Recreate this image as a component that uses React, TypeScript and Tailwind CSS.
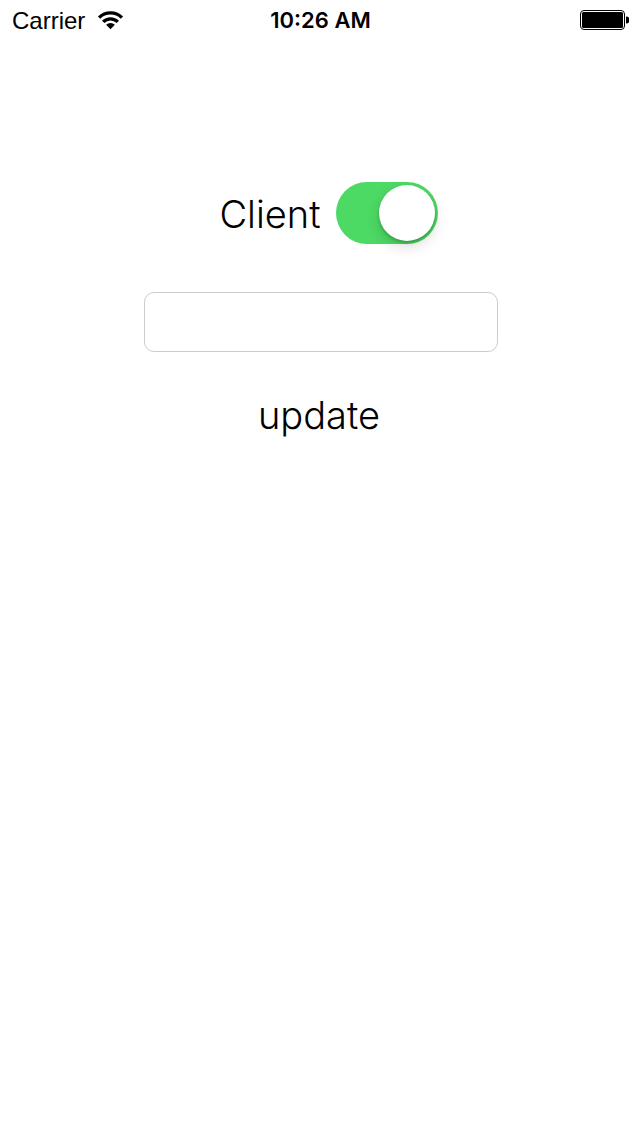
import { useState } from "react";

function StatusBar() {
  return (
    <header className="grid h-10 grid-cols-3 items-center pl-3 pr-[11px] text-2xl">
      <div className="flex items-center gap-3 pt-0.5">
        <span>Carrier</span>
        <svg viewBox="0 0 26 18" className="h-[18px] w-[26px] overflow-visible" role="img" aria-label="Wi-Fi">
          <g fill="none" stroke="#000" strokeWidth="3.4">
            <path d="M2.1 5.6A16.2 16.2 0 0 1 24.9 5.6" />
            <path d="M6.2 9.9A10.3 10.3 0 0 1 20.8 9.9" />
          </g>
          <path d="M13.5 17.2L9.1 12.8A6.2 6.2 0 0 1 17.9 12.8Z" />
        </svg>
      </div>
      <span className="pt-0.5 text-center font-['Inter','Liberation_Sans',sans-serif] text-[22px] font-semibold">
        10:26 AM
      </span>
      <svg viewBox="0 0 49 20" className="h-5 w-[49px] justify-self-end" role="img" aria-label="Battery full">
        <rect x="0.5" y="0.5" width="44" height="19" rx="3.5" fill="none" stroke="#000" />
        <rect x="2" y="2" width="41" height="16" rx="1.5" />
        <path d="M46 6.5A3.5 3.5 0 0 1 46 13.5Z" />
      </svg>
    </header>
  );
}

export default function App() {
  const [client, setClient] = useState(true);
  const [value, setValue] = useState("");
  return (
    <div className="min-h-screen bg-white font-['Liberation_Sans',Arial,sans-serif] text-black">
      <StatusBar />
      <main className="flex flex-col items-center pt-[142px] font-['Inter','Liberation_Sans',sans-serif] font-light">
        <label className="ml-[17px] flex items-center gap-[15px] text-[38px] leading-[60px]">
          <span className="pt-0.5">Client</span>
          <input
            type="checkbox"
            role="switch"
            checked={client}
            onChange={(e) => setClient(e.target.checked)}
            className="h-[62px] w-[102px] appearance-none rounded-full bg-[#e5e5e5] p-[3px] before:block before:size-14 before:rounded-full before:bg-white before:shadow-[0_6px_14px_rgba(0,0,0,0.14),0_2px_3px_rgba(0,0,0,0.2)] checked:bg-[#4cd964] checked:before:ml-10"
          />
        </label>
        <input
          type="text"
          aria-label="Client address"
          value={value}
          onChange={(e) => setValue(e.target.value)}
          className="ml-0.5 mt-12 h-[60px] w-[354px] rounded-[10px] border border-[#cccccc] px-3 text-3xl outline-none"
        />
        <button type="button" className="mr-0.5 mt-8 text-[38px] leading-[62px]">
          update
        </button>
      </main>
    </div>
  );
}
